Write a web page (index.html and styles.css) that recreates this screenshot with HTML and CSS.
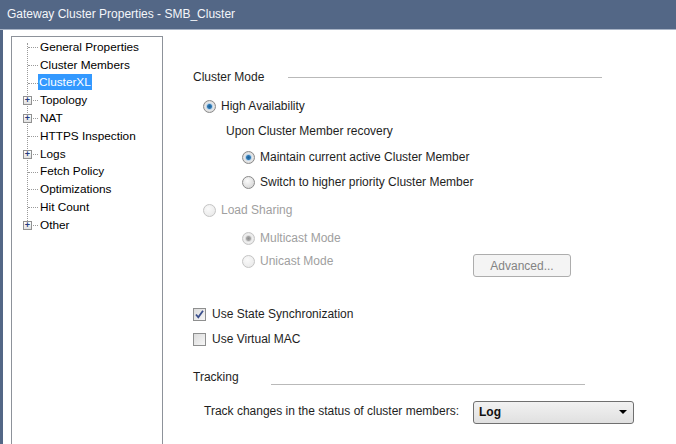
FILE: index.html
```html
<!DOCTYPE html>
<html lang="en">
<head>
    <meta charset="UTF-8">
    <title>Gateway Cluster Properties - SMB_Cluster</title>
    <link rel="stylesheet" href="styles.css">
</head>
<body>
    <div class="titlebar">Gateway Cluster Properties - SMB_Cluster</div>

    <div class="window">
        <!-- navigation tree -->
        <div class="tree">
            <ul class="tree-list">
                <li><span class="node"></span>General Properties</li>
                <li><span class="node"></span>Cluster Members</li>
                <li class="selected"><span class="node"></span><span class="label">ClusterXL</span></li>
                <li><span class="node"><span class="exp">+</span></span>Topology</li>
                <li><span class="node"><span class="exp">+</span></span>NAT</li>
                <li><span class="node"></span>HTTPS Inspection</li>
                <li><span class="node"><span class="exp">+</span></span>Logs</li>
                <li><span class="node"></span>Fetch Policy</li>
                <li><span class="node"></span>Optimizations</li>
                <li><span class="node"></span>Hit Count</li>
                <li><span class="node"><span class="exp">+</span></span>Other</li>
            </ul>
        </div>

        <!-- ClusterXL page -->
        <div class="page">
            <div class="group-title">
                <span class="group-label">Cluster Mode</span>
                <span class="rule"></span>
            </div>

            <div class="row ha">
                <span class="radio checked"></span>High Availability
            </div>
            <div class="row recovery">Upon Cluster Member recovery</div>
            <div class="row sub maintain">
                <span class="radio checked"></span>Maintain current active Cluster Member
            </div>
            <div class="row sub switch">
                <span class="radio"></span>Switch to higher priority Cluster Member
            </div>

            <div class="row disabled loadsharing">
                <span class="radio"></span>Load Sharing
            </div>
            <div class="row sub disabled multicast">
                <span class="radio checked"></span>Multicast Mode
            </div>
            <div class="row sub disabled unicast">
                <span class="unicast-label"><span class="radio"></span>Unicast Mode</span>
                <button class="btn" disabled>Advanced...</button>
            </div>

            <div class="row check-row sync">
                <span class="checkbox">
                    <svg width="11" height="11" viewBox="0 0 11 11"><path d="M2 5.5 L4.3 8.3 L9 1.8" fill="none" stroke="#3b4f8c" stroke-width="1.8"/></svg>
                </span>Use State Synchronization
            </div>
            <div class="row check-row vmac">
                <span class="checkbox"></span>Use Virtual MAC
            </div>

            <div class="group-title tracking">
                <span class="group-label">Tracking</span>
                <span class="rule"></span>
            </div>

            <div class="row track">
                <span class="track-label">Track changes in the status of cluster members:</span>
                <div class="select">
                    <span>Log</span>
                    <span class="arrow"></span>
                </div>
            </div>
        </div>
    </div>
</body>
</html>
```

FILE: styles.css
```css
body {
    margin: 0;
    width: 676px;
    height: 444px;
    overflow: hidden;
    background-color: #536786;
    font-family: "Liberation Sans", Arial, sans-serif;
    font-size: 12px;
    color: #1e1e1e;
}
.titlebar {
    height: 30px;
    line-height: 28px;
    padding-left: 7px;
    font-size: 12px;
    color: #f4f6fa;
    border-bottom: 1px solid #a9b4c6;
    box-sizing: border-box;
}
.window {
    display: flex;
    height: 414px;
    margin-left: 3px;
    background-color: #fff;
}

/* Tree */
.tree {
    width: 150px;
    margin: 6px 0 0 8px;
    border: 1px solid #8d929a;
    border-bottom: none;
    padding-top: 1px;
}
.tree-list {
    list-style: none;
    margin: 0;
    padding: 0;
    position: relative;
}
.tree-list::before {
    content: "";
    position: absolute;
    left: 15px;
    top: 5px;
    height: 180px;
    border-left: 1px dotted #9a9a9a;
}
.tree-list li {
    display: flex;
    align-items: center;
    height: 17.8px;
    font-size: 11.8px;
    color: #000;
}
.node {
    position: relative;
    width: 28px;
    height: 100%;
    flex: none;
}
.node::after {
    content: "";
    position: absolute;
    left: 16px;
    right: 2px;
    top: 9px;
    border-top: 1px dotted #9a9a9a;
}
.exp {
    position: absolute;
    left: 11px;
    top: 5px;
    width: 7px;
    height: 7px;
    border: 1px solid #919191;
    background: linear-gradient(#fff, #e1e1e1);
    color: #233a80;
    font-size: 9px;
    line-height: 7px;
    text-align: center;
    font-weight: bold;
    z-index: 1;
}
.selected .label {
    background-color: #3399ff;
    color: #fff;
    padding: 1px 1px;
    margin-left: -2px;
}

/* Page */
.page {
    flex: 1;
    padding: 37px 0 0 30px;
}
.group-title {
    display: flex;
    align-items: center;
    height: 20px;
}
.group-label {
    width: 95px;
    flex: none;
}
.group-title .rule {
    width: 314px;
    border-top: 1px solid #b9b9b9;
}
.group-title.tracking {
    margin-top: 18px;
    align-items: flex-start;
    line-height: 20px;
}
.tracking .group-label {
    width: 78px;
}
.group-title.tracking .rule {
    margin-top: 17px;
}
.row {
    display: flex;
    align-items: center;
    height: 20px;
    padding-left: 10px;
}
.row.sub {
    padding-left: 49px;
}
.row.disabled {
    color: #a0a0a0;
}
.ha { margin-top: 9px; }
.recovery { margin-top: 5px; padding-left: 33px; }
.maintain { margin-top: 6px; }
.switch { margin-top: 5px; }
.loadsharing { margin-top: 8px; }
.multicast { margin-top: 8px; }
.unicast { margin-top: 3px; }
.sync { margin-top: 33px; }
.vmac { margin-top: 5px; }
.track { margin-top: 14px; padding-left: 11px; }

.radio {
    width: 11px;
    height: 11px;
    border: 1px solid #8a8a8a;
    border-radius: 50%;
    margin-right: 5px;
    background: radial-gradient(circle at 40% 35%, #fbfbfb, #dcdcdc 70%, #cfcfcf);
    flex: none;
}
.radio.checked {
    background: radial-gradient(circle, #1d5f95 0, #2f7ab5 2px, #b9d3ea 3px, #e7e7e7 4px, #d7d7d7 6px);
}
.disabled .radio {
    border-color: #c4c4c4;
    background: radial-gradient(circle at 40% 35%, #fafafa, #e6e6e6);
}
.disabled .radio.checked {
    background: radial-gradient(circle, #8c8c8c 0, #a5a5a5 2px, #dadada 3px, #f0f0f0 4px, #e4e4e4 6px);
}
.unicast-label {
    display: flex;
    align-items: center;
    width: 231px;
}
.btn {
    width: 98px;
    height: 23px;
    margin-top: 9px;
    border: 1px solid #adadad;
    border-radius: 3px;
    background-color: #f4f4f4;
    color: #838383;
    font-family: inherit;
    font-size: 12px;
    padding: 0;
}
.check-row {
    padding-left: 0;
}
.checkbox {
    width: 11px;
    height: 11px;
    border: 1px solid #8e8f8f;
    margin-right: 6px;
    background: linear-gradient(135deg, #dcdcdc, #f6f6f6);
    flex: none;
    display: flex;
    align-items: center;
    justify-content: center;
}
.track-label {
    width: 269px;
    flex: none;
    color: #1e1e1e;
}
.select {
    width: 161px;
    height: 23px;
    margin-top: 2px;
    border: 1px solid #707070;
    border-radius: 3px;
    background: linear-gradient(#f2f2f2, #e0e0e0);
    display: flex;
    align-items: center;
    justify-content: space-between;
    padding: 0 6px 0 5px;
    box-sizing: border-box;
    font-weight: bold;
    color: #111;
}
.arrow {
    width: 0;
    height: 0;
    border-left: 4px solid transparent;
    border-right: 4px solid transparent;
    border-top: 4px solid #000;
}
```
